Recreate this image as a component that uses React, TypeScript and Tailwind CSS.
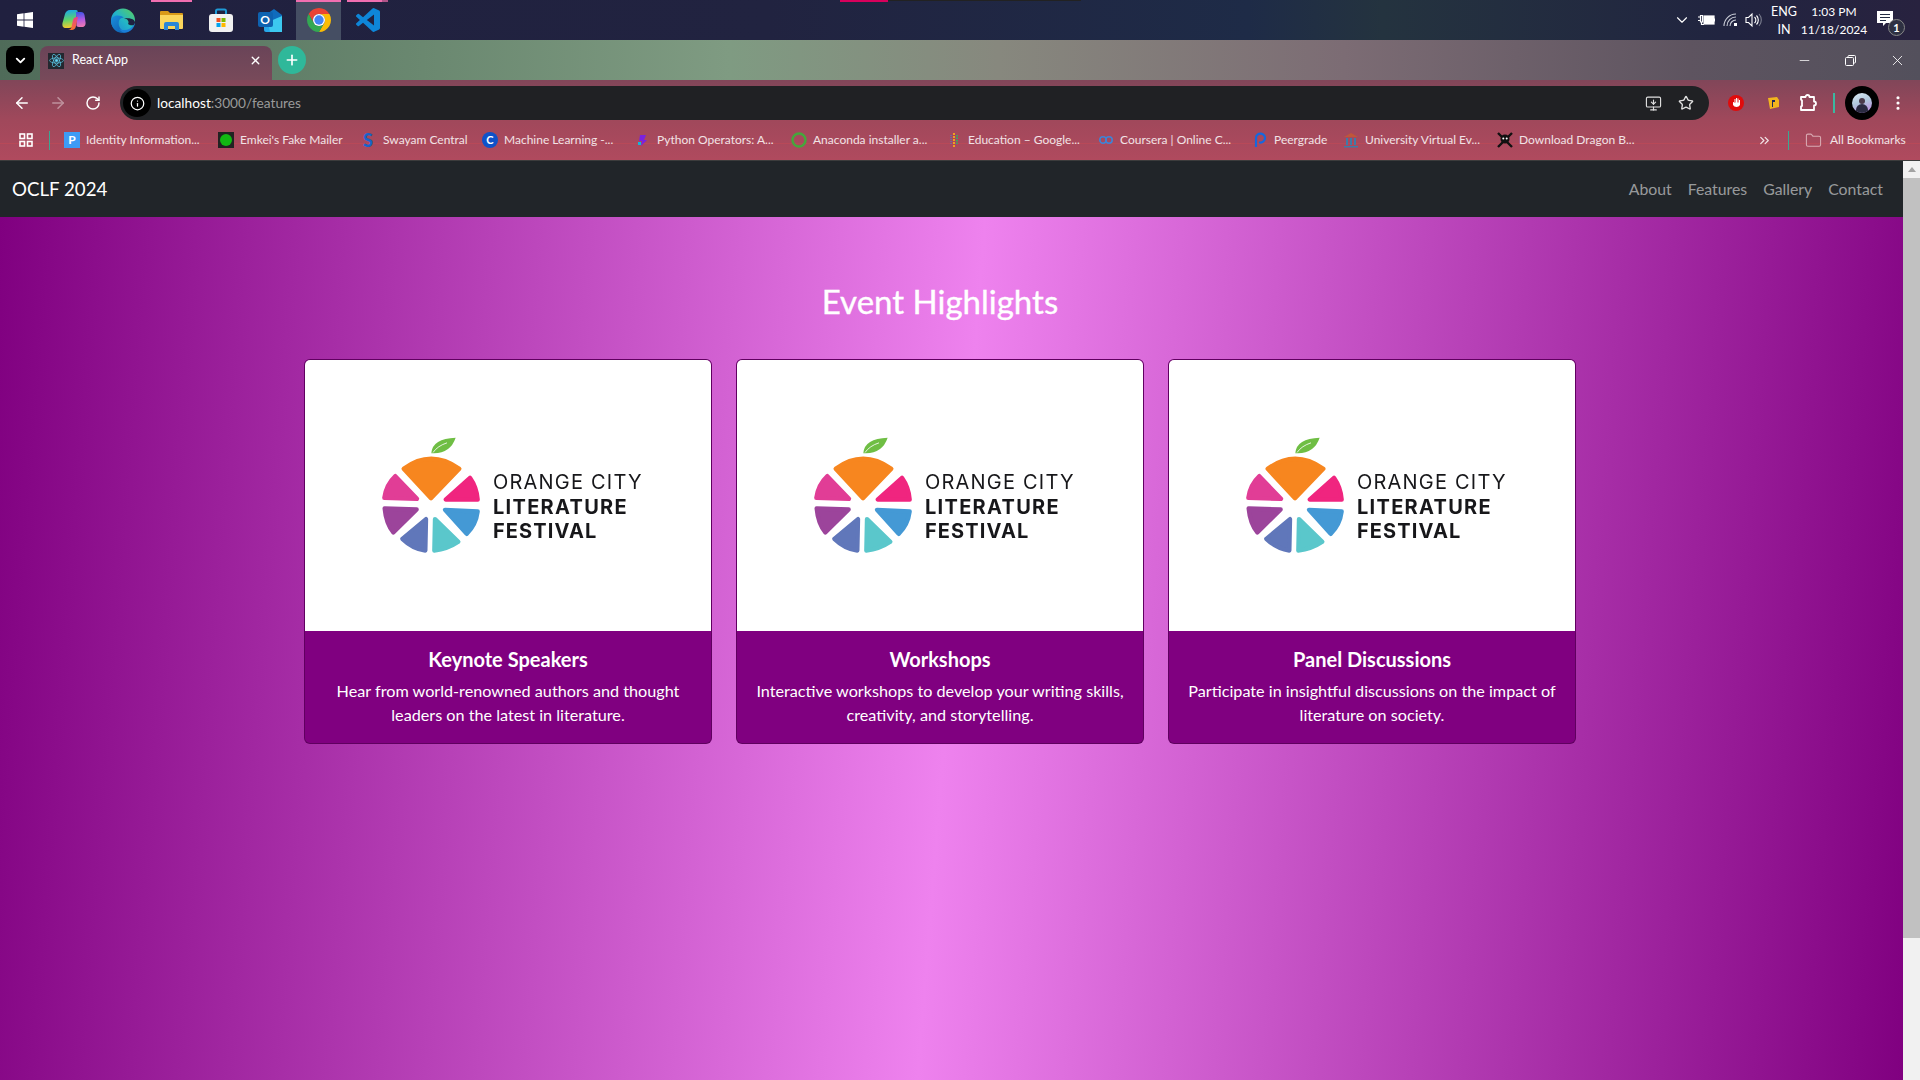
import { ArrowLeft, ArrowRight, RotateCw, Info, Star, EllipsisVertical, Minus, X, Plus, ChevronDown, Folder, ChevronsRight, MonitorDown } from "lucide-react";

const ui = { fontFamily: 'Lato, "Noto Sans", sans-serif' };

function Logo() {
  return (
    <div className="h-[271px] bg-white flex items-center pl-[76px] text-left">
      <svg width="100" height="117" viewBox="30 20 300 350" className="shrink-0 blur-[0.3px]">
        <g strokeWidth="13" strokeLinejoin="round">
          <path d="M98 115 Q180 55 265 115 L180 203 Z" fill="#f7861f" stroke="#f7861f" />
          <path d="M297 142 Q317 170 320 207 L224 207 Z" fill="#f0257f" stroke="#f0257f" />
          <path d="M222 238 L320 243 Q315 283 287 310 Z" fill="#4499d5" stroke="#4499d5" />
          <path d="M192 266 L262 334 Q230 356 190 360 Z" fill="#5ac7cb" stroke="#5ac7cb" />
          <path d="M165 266 L163 360 Q125 355 94 325 Z" fill="#6077ba" stroke="#6077ba" />
          <path d="M41 234 L137 237 L67 306 Q45 278 41 234 Z" fill="#9c449b" stroke="#9c449b" />
          <path d="M73 137 L138 205 L40 202 Q46 162 73 137 Z" fill="#e13d96" stroke="#e13d96" />
        </g>
        <path d="M181 68 Q185 24 254 22 Q237 72 181 68 Z" fill="#6fbe44" />
        <path d="M186 66 Q200 46 228 37" fill="none" stroke="#fff" strokeWidth="2.5" />
      </svg>
      <div className="ml-[12px] mt-[23px] text-[#17171a] whitespace-nowrap blur-[0.3px]" style={{ fontFamily: "Inter, sans-serif" }}>
        <div className="text-[20px] leading-[24.5px] font-normal tracking-[1.2px]">ORANGE CITY</div>
        <div className="text-[20px] leading-[24.5px] font-bold tracking-[1.3px]">LITERATURE</div>
        <div className="text-[20px] leading-[24.5px] font-bold tracking-[1.1px]">FESTIVAL</div>
      </div>
    </div>
  );
}

function Card({ title, children }: { title: string; children: React.ReactNode }) {
  return (
    <div className="w-[408px] border border-[rgba(0,0,0,0.25)] rounded-md overflow-hidden bg-[#800080] text-white text-center">
      <Logo />
      <div className="p-4">
        <h5 className="text-[20px] leading-6 font-bold mb-2">{title}</h5>
        <p className="text-[16.2px] leading-6">{children}</p>
      </div>
    </div>
  );
}

function TaskBtn({ children, active, line }: { children: React.ReactNode; active?: boolean; line?: boolean }) {
  return (
    <div className={active ? "relative w-[45px] mx-[2px] h-10 bg-[#454e63] flex items-center justify-center" : "relative w-[49px] h-10 flex items-center justify-center"}>
      {line ? <div className={active ? "absolute top-0 left-0 right-0 h-[2px] bg-[#f06eb0]" : "absolute top-0 left-[4px] right-[4px] h-[2px] bg-[#f06eb0]"} /> : null}
      {children}
    </div>
  );
}

const bookmarks: { icon: React.ReactNode; text: string; w: string }[] = [
  { w: "w-[114px]", text: "Identity Information...", icon: <div className="w-4 h-4 bg-[#3d9bf5] text-white text-[12px] font-bold leading-4 text-center">P</div> },
  { w: "w-[103px]", text: "Emkei's Fake Mailer", icon: <div className="w-4 h-4 bg-[#222] flex items-center justify-center"><div className="w-3 h-3 rounded-full bg-[#12b812]" /></div> },
  { w: "w-[81px]", text: "Swayam Central", icon: <div className="w-4 h-4 -ml-[1px] text-[#1763c9] text-[18px] font-black leading-4 text-center">S</div> },
  { w: "w-[113px]", text: "Machine Learning -...", icon: <div className="w-4 h-4 rounded-full bg-[#0f52c9] text-white text-[11px] font-bold leading-4 text-center">C</div> },
  { w: "w-[116px]", text: "Python Operators: A...", icon: <svg width="16" height="16" viewBox="0 0 16 16"><path d="M5 3h6l-2 5h3l-6 6 1-5H4z" fill="#7a22e0" /><path d="M3 10h3v3H3z" fill="#14b6d6" /></svg> },
  { w: "w-[115px]", text: "Anaconda installer a...", icon: <svg width="16" height="16" viewBox="0 0 16 16"><circle cx="8" cy="8" r="6.5" fill="none" stroke="#46a63c" strokeWidth="2.5" /></svg> },
  { w: "w-[112px]", text: "Education – Google...", icon: <svg width="16" height="16" viewBox="0 0 16 16"><path d="M8 1v14" stroke="#f0a020" strokeWidth="2" strokeDasharray="2 1" /><path d="M5 3v10" stroke="#3c8ad8" strokeWidth="1" strokeDasharray="1 1" /><path d="M11 3v10" stroke="#3ca860" strokeWidth="2" strokeDasharray="1.5 1" /></svg> },
  { w: "w-[114px]", text: "Coursera | Online C...", icon: <svg width="16" height="16" viewBox="0 0 16 16"><circle cx="5" cy="8" r="3.2" fill="none" stroke="#3f83d6" strokeWidth="1.6" /><circle cx="11" cy="8" r="3.2" fill="none" stroke="#3f83d6" strokeWidth="1.6" /></svg> },
  { w: "w-[51px]", text: "Peergrade", icon: <svg width="16" height="16" viewBox="0 0 16 16"><path d="M4 15V6a4.5 4.5 0 1 1 3 4.3" fill="none" stroke="#1468e0" strokeWidth="2.2" /></svg> },
  { w: "w-[114px]", text: "University Virtual Ev...", icon: <svg width="16" height="16" viewBox="0 0 16 16"><path d="M8 1l7 4H1z" fill="#c0563a" /><path d="M3 6h2v7H3zM7 6h2v7H7zM11 6h2v7h-2z" fill="#3e7ba8" /><path d="M1 14h14v1.5H1z" fill="#3e7ba8" /></svg> },
  { w: "w-[116px]", text: "Download Dragon B...", icon: <svg width="16" height="16" viewBox="0 0 16 16"><path d="M1 1l14 14M15 1L1 15" stroke="#111" strokeWidth="2.4" /><circle cx="8" cy="7" r="4.5" fill="#111" /><circle cx="6.3" cy="6.5" r="1" fill="#fff" /><circle cx="9.7" cy="6.5" r="1" fill="#fff" /></svg> },
];

export default function App() {
  return (
    <div className="h-screen w-[1920px] overflow-hidden flex flex-col bg-[#212529]" style={ui}>
      {/* Windows taskbar */}
      <div className="relative h-10 shrink-0 flex items-center bg-[linear-gradient(90deg,#20203f_0%,#212340_40%,#1e2b47_65%,#24333f_72%,#212440_90%,#28223f_100%)] text-white">
        <div className="absolute top-0 left-[840px] w-[48px] h-[2px] bg-[#d8005c]" />
        <div className="absolute top-0 left-[888px] w-[193px] h-[1px] bg-[#222]" />
        <TaskBtn>
          <svg width="16" height="16" viewBox="0 0 16 16" fill="#fff"><path d="M0 2.2l6.6-.9v6.3H0zM7.4 1.2L16 0v7.6H7.4zM0 8.4h6.6v6.3L0 13.8zM7.4 8.4H16V16l-8.6-1.2z" /></svg>
        </TaskBtn>
        <TaskBtn>
          <svg width="24" height="22" viewBox="0 0 24 22">
            <defs>
              <linearGradient id="cp1" x1="0.3" y1="0" x2="0.4" y2="1"><stop offset="0" stopColor="#1aa7e8" /><stop offset="0.55" stopColor="#5fd36a" /><stop offset="1" stopColor="#f7c92e" /></linearGradient>
              <linearGradient id="cp2" x1="0.5" y1="0" x2="0.6" y2="1"><stop offset="0" stopColor="#3f55e8" /><stop offset="0.5" stopColor="#b05ae0" /><stop offset="1" stopColor="#f07ab0" /></linearGradient>
              <linearGradient id="cp3" x1="0" y1="0" x2="0" y2="1"><stop offset="0" stopColor="#e83f8c" /><stop offset="1" stopColor="#f7742e" /></linearGradient>
            </defs>
            <path d="M8 1h6c1.500 0 2 1 1.500 2L12 15c-1 3-3 4-5 4H4c-3 0-4-2-3.500-5L3 5c.5-2 2.500-4 5-4z" fill="url(#cp1)" />
            <path d="M14 3h5c2 0 3 1 3.500 3l1 7c.5 3-1 5-3.500 5h-3c-2 0-3-1-2.500-3z" fill="url(#cp2)" />
            <path d="M11 11c.5-2 2-3 4-3h1l-2 9c-.5 2.500-2 4-4.500 4H6c2 0 3-1 3.500-3z" fill="url(#cp3)" />
          </svg>
        </TaskBtn>
        <TaskBtn>
          <svg width="24" height="25" viewBox="0 0 24 25">
            <defs>
              <linearGradient id="ed1" x1="1" y1="0" x2="0" y2="1"><stop offset="0" stopColor="#5cd05a" /><stop offset="0.5" stopColor="#22b4c8" /><stop offset="1" stopColor="#1e7fd8" /></linearGradient>
              <linearGradient id="ed2" x1="0" y1="0" x2="1" y2="1"><stop offset="0" stopColor="#1a8fdc" /><stop offset="1" stopColor="#0c58ac" /></linearGradient>
            </defs>
            <circle cx="12" cy="12.500" r="12" fill="url(#ed1)" />
            <path d="M0 12.500C1 7 9 6 13 10c-4-1-6 3-5 7.500 1 4 5 7 10 6-3 1.500-6 1.500-8 1.200C4 24 0 19 0 12.500z" fill="url(#ed2)" />
            <path d="M13 10c4 0 11 .5 11 4.500 0 3.500-4.500 3.500-7 1.500 1.500-2 0-5-4-6z" fill="#1f2140" />
            <path d="M24 15c-.5 5-5 10-11 9.500-2.500-.5-4-2-5-4 4 3 12 2 16-5.500z" fill="#1a7ed8" />
          </svg>
        </TaskBtn>
        <TaskBtn line>
          <svg width="23" height="20" viewBox="0 0 23 20">
            <path d="M0 2a1 1 0 0 1 1-1h7l2 2h12a1 1 0 0 1 1 1v3H0z" fill="#d99a18" />
            <path d="M0 5h23v13a1 1 0 0 1-1 1H1a1 1 0 0 1-1-1z" fill="#fbd65c" />
            <path d="M4 20v-6a2 2 0 0 1 2-2h11a2 2 0 0 1 2 2v6h-4v-4H8v4z" fill="#2a86d8" />
          </svg>
        </TaskBtn>
        <TaskBtn>
          <svg width="24" height="24" viewBox="0 0 24 24">
            <path d="M7 7V3a1.500 1.500 0 0 1 1.500-1.500h7A1.500 1.500 0 0 1 17 3v4" fill="none" stroke="#1f9ad6" strokeWidth="2" />
            <rect x="0" y="6" width="24" height="18" rx="3" fill="#f1f1f1" />
            <rect x="7.500" y="10" width="4" height="4" fill="#f25022" />
            <rect x="12.500" y="10" width="4" height="4" fill="#7fba00" />
            <rect x="7.500" y="15" width="4" height="4" fill="#00a4ef" />
            <rect x="12.500" y="15" width="4" height="4" fill="#ffb900" />
          </svg>
        </TaskBtn>
        <TaskBtn>
          <div className="relative w-6 h-[23px]">
            <svg width="24" height="23" viewBox="0 0 24 23" className="absolute inset-0">
              <path d="M6 7l10-7 8 6v8H6z" fill="#0f6cbd" />
              <path d="M6 12h18v9a2 2 0 0 1-2 2H8a2 2 0 0 1-2-2z" fill="#28a8ea" />
              <path d="M24 7v16H12l-2-10z" fill="#3cc8f0" />
            </svg>
            <div className="absolute left-0 top-[3px] w-[15px] h-[15px] rounded-[2px] bg-[#0e62b0] text-white text-[12px] font-bold leading-[15px] text-center">O</div>
          </div>
        </TaskBtn>
        <TaskBtn active line>
          <svg width="24" height="24" viewBox="2 2 44 44">
            <path d="M43.050 13A22 22 0 0 0 4.950 13L14.470 29.500A11 11 0 0 1 24 13Z" fill="#ea4335" />
            <path d="M43.050 13A22 22 0 0 1 24 46L33.530 29.500A11 11 0 0 0 24 13Z" fill="#fbbc05" />
            <path d="M4.950 13A22 22 0 0 0 24 46L33.530 29.500A11 11 0 0 1 14.470 29.500Z" fill="#34a853" />
            <circle cx="24" cy="24" r="11" fill="#fff" />
            <circle cx="24" cy="24" r="8.600" fill="#4285f4" />
          </svg>
        </TaskBtn>
        <div className="relative w-[49px] h-10 flex items-center justify-center">
          <div className="absolute top-0 left-[4px] right-[10px] h-[2px] bg-[#f06eb0]" />
          <div className="absolute top-0 right-[4px] w-[6px] h-[2px] bg-[#b05488]" />
          <svg width="24" height="24" viewBox="0 0 24 24">
            <path d="M23.150 2.587L18.210.21a1.494 1.494 0 0 0-1.705.29l-9.460 8.630-4.120-3.128a.999.999 0 0 0-1.276.057L.327 7.261A1 1 0 0 0 .326 8.740L3.899 12 .326 15.260a1 1 0 0 0 .001 1.479L1.650 17.940a.999.999 0 0 0 1.276.057l4.120-3.128 9.460 8.630a1.492 1.492 0 0 0 1.704.29l4.942-2.377A1.500 1.500 0 0 0 24 20.060V3.939a1.500 1.500 0 0 0-.850-1.352zm-5.146 14.861L10.826 12l7.178-5.448v10.896z" fill="#0e86d8" />
          </svg>
        </div>
        <div className="flex-1" />
        <ChevronDown size={18} strokeWidth={1.5} className="mr-[7px]" />
        <svg width="17" height="12" viewBox="0 0 17 12" className="mr-[8px]" fill="none" stroke="#fff" strokeWidth="1.200"><path d="M0 3h2.500M0 6.500h2.500M2.500 1.500h2v6.500h-2zM3.500 8v2.500h2.500" /><rect x="6" y="2" width="10" height="8" fill="#fff" /><path d="M16.500 4.500v3" /></svg>
        <svg width="17" height="14" viewBox="0 0 17 14" className="mr-[5px]" fill="none" stroke="#c9ccd6" strokeWidth="1.100"><path d="M1 13A12 12 0 0 1 13 1M4 13A9 9 0 0 1 13 4M7 13A6 6 0 0 1 13 7" /><rect x="11" y="10" width="3" height="3" fill="#fff" stroke="none" /></svg>
        <svg width="18" height="16" viewBox="0 0 18 16" className="mr-[7px]" fill="none" stroke="#fff" strokeWidth="1.100"><path d="M1 5.500h2.500L7 2v12L3.500 10.500H1z" /><path d="M9.500 5a4 4 0 0 1 0 6M11.500 3.500a6.500 6.500 0 0 1 0 9" /><path d="M14 2a9 9 0 0 1 0 12" stroke="#7d8090" /></svg>
        <div className="w-[28px] text-[12.5px] leading-[18px] pt-px text-center">
          <div>ENG</div>
          <div>IN</div>
        </div>
        <div className="w-[72px] text-[12px] leading-[18px] pt-px text-center">
          <div>1:03 PM</div>
          <div>11/18/2024</div>
        </div>
        <div className="relative w-[36px] mr-[14px] h-10 flex items-center justify-center">
          <svg width="16" height="15" viewBox="0 0 16 15" className="-mt-[3px] -ml-[6px]"><path d="M0 0h16v12H9l-3 3v-3H0z" fill="#fff" /><path d="M3 3.500h10M3 6.500h10M3 9.500h6" stroke="#222a42" strokeWidth="1" /></svg>
          <div className="absolute left-[18px] top-[19px] w-[17px] h-[17px] rounded-full border border-[#888] bg-[#2e3142] text-[11px] font-bold leading-[15px] text-center">1</div>
        </div>
      </div>

      {/* Tab strip */}
      <div className="relative h-10 shrink-0 flex items-end bg-[linear-gradient(90deg,#4f6b59_0%,#6a8870_22%,#7f9b82_38%,#87887e_52%,#7c6c74_70%,#5e5460_88%,#53505c_100%)] text-white">
        <div className="w-7 h-7 ml-[6px] mb-[6px] rounded-lg bg-black flex items-center justify-center"><ChevronDown size={15} strokeWidth={3} /></div>
        <div className="w-[232px] h-[34px] ml-[6px] rounded-t-lg bg-[linear-gradient(180deg,#6a4458,#784a5a)] flex items-center pl-2 pr-2 pb-[5px]">
          <div className="w-4 h-4 bg-[#23272f] flex items-center justify-center">
            <svg width="15" height="15" viewBox="-12 -12 24 24" fill="none" stroke="#61dafb" strokeWidth="1">
              <ellipse rx="11" ry="4.200" /><ellipse rx="11" ry="4.200" transform="rotate(60)" /><ellipse rx="11" ry="4.200" transform="rotate(120)" /><circle r="2" fill="#61dafb" />
            </svg>
          </div>
          <span className="ml-2 text-[12.5px]">React App</span>
          <div className="flex-1" />
          <X size={13} strokeWidth={2.5} className="mr-[2px]" />
        </div>
        <div className="w-7 h-7 ml-[6px] mb-[6px] rounded-full bg-[#2fb89a] flex items-center justify-center"><Plus size={16} strokeWidth={2.5} /></div>
        <div className="flex-1" />
        <div className="flex items-center h-10 pr-[14px] gap-[32px]">
          <Minus size={15} strokeWidth={1.2} />
          <svg width="13" height="13" viewBox="0 0 13 13" fill="none" stroke="#fff" strokeWidth="1"><rect x="1.500" y="3.500" width="8" height="8" rx="1" /><path d="M4 3.500V2.500a1 1 0 0 1 1-1h5.500a1 1 0 0 1 1 1V8a1 1 0 0 1-1 1h-1" /></svg>
          <X size={17} strokeWidth={1.2} />
        </div>
      </div>

      {/* Toolbar and bookmarks */}
      <div className="relative shrink-0 h-[81px] bg-[linear-gradient(180deg,#814659_0%,#a0485b_50%,#b04a5e_100%)] border-b border-[#3c3c3c] text-white">
        <div className="h-10 flex items-end">
          <div className="w-[120px] h-[34px] flex items-center pl-[13px] gap-[18px]">
            <ArrowLeft size={18} strokeWidth={2} />
            <ArrowRight size={18} strokeWidth={2} className="opacity-40" />
            <RotateCw size={16} strokeWidth={2.2} />
          </div>
          <div className="w-[1589px] h-[34px] rounded-full bg-[#202124] flex items-center pl-[3px] pr-[14px]">
            <div className="w-7 h-7 rounded-full bg-black flex items-center justify-center"><Info size={15} /></div>
            <span className="ml-[6px] text-[13.7px] leading-[18px] -mt-[1px]">localhost<span className="text-[#9a9a9a]">:3000/features</span></span>
            <div className="flex-1" />
            <MonitorDown size={17} strokeWidth={1.6} className="mr-[16px] text-[#e0e0e0]" />
            <Star size={16} strokeWidth={2} className="mr-[1px] text-[#e0e0e0]" />
          </div>
          <div className="flex-1 h-[34px] flex items-center relative pl-[19px]">
            <div className="w-4 h-4 rounded-full bg-[#e00b0b] flex items-center justify-center"><svg width="9" height="12" viewBox="0 0 9 12"><path d="M1 5v3a4 4 0 0 0 7 0V3H7v2.500H6.500V1.500h-1v4H5V1h-1v4.500H3.500V2h-1v4L1.500 5z" fill="#fff" /></svg></div>
            <svg width="14" height="16" viewBox="0 0 14 16" className="ml-[22px]"><path d="M2 3l9-1 2 3v7l-9 2z" fill="#f2b51d" /><path d="M6 5h3v2H7v5H6z" fill="#1e2a5a" /></svg>
            <svg width="18" height="18" viewBox="0 0 18 18" className="ml-[19px]" fill="none" stroke="#fff" strokeWidth="1.800" strokeLinejoin="round"><path d="M2 3h4.500a2 2 0 0 1 4 0H15v4.500a2 2 0 0 1 0 4V16H2v-3.500a1 1 0 0 0 1-1.500V6.500L2 5.500z" /></svg>
            <div className="w-[2px] h-5 bg-[#3ab8a0] ml-[16px]" />
            <div className="w-[34px] h-[34px] rounded-full bg-black flex items-center justify-center ml-[10px]">
              <div className="relative w-5 h-5 rounded-full overflow-hidden bg-[linear-gradient(160deg,#dcecf4_0%,#b0c8dc_45%,#c080e0_100%)]">
                <div className="absolute left-[7px] top-[5px] w-[6px] h-[6px] rounded-full bg-[#4a3a4a]" />
                <div className="absolute left-[4px] top-[11px] w-3 h-3 rounded-t-md bg-[#2a2a40]" />
              </div>
            </div>
            <EllipsisVertical size={18} strokeWidth={2.2} className="ml-[10px]" />
          </div>
        </div>
        <div className="relative h-10 flex items-center text-[12px] text-[#f2e3e6]">
          <div className="absolute left-0 right-0 top-[23px] h-px bg-[#c34a55] opacity-60" />
          <div className="relative w-[49px] flex justify-center pl-[3px]">
            <svg width="14" height="14" viewBox="0 0 14 14" fill="none" stroke="#fff" strokeWidth="1.600"><rect x="1" y="1" width="4.500" height="4.500" /><rect x="8.500" y="1" width="4.500" height="4.500" /><rect x="1" y="8.500" width="4.500" height="4.500" /><rect x="8.500" y="8.500" width="4.500" height="4.500" /></svg>
          </div>
          <div className="relative w-px h-[19px] bg-[#3aa893]" />
          <div className="relative flex items-center gap-[18px] ml-[14px]">
            {bookmarks.map((b) => (
              <div key={b.text} className="flex items-center gap-[6px]">
                <div className="w-4 h-4 shrink-0">{b.icon}</div>
                <span className={b.w + " whitespace-nowrap"}>{b.text}</span>
              </div>
            ))}
          </div>
          <div className="flex-1" />
          <ChevronsRight size={15} strokeWidth={2} className="relative mr-[16px]" />
          <div className="relative w-px h-[19px] bg-[#3aa893] mr-[16px]" />
          <Folder size={17} strokeWidth={1.5} className="relative text-[#d9aab2] mr-[8px]" />
          <span className="relative w-[75px] mr-[15px] whitespace-nowrap">All Bookmarks</span>
        </div>
      </div>

      {/* Page and its scrollbar */}
      <div className="flex-1 min-h-0 flex">
        <div className="flex-1 min-w-0 flex flex-col">
          <nav className="h-14 shrink-0 bg-[#212529] flex items-center pl-3 pr-[20px]">
            <span className="text-[18.7px] text-white">OCLF 2024</span>
            <div className="flex-1" />
            <div className="flex items-center gap-4 text-[15.8px] text-[rgba(255,255,255,0.55)]">
              <span>About</span>
              <span>Features</span>
              <span>Gallery</span>
              <span>Contact</span>
            </div>
          </nav>
          <main className="flex-1 bg-[linear-gradient(94.5deg,#800080,#ee82ee,#800080)] pt-[65px] pr-[23px]">
            <h2 className="text-[33px] leading-[38px] text-white text-center mb-[39px] [-webkit-text-stroke:0.35px_white]">Event Highlights</h2>
            <div className="flex justify-center gap-6">
              <Card title="Keynote Speakers">Hear from world-renowned authors and thought leaders on the latest in literature.</Card>
              <Card title="Workshops">Interactive workshops to develop your writing skills, creativity, and storytelling.</Card>
              <Card title="Panel Discussions">Participate in insightful discussions on the impact of literature on society.</Card>
            </div>
          </main>
        </div>
        <div className="w-[17px] shrink-0 bg-[#f1f1f1] flex flex-col items-center">
          <div className="h-[17px] flex items-center justify-center"><div className="w-0 h-0 border-x-[4px] border-x-transparent border-b-[5px] border-b-[#a3a3a3]" /></div>
          <div className="w-full h-[760px] bg-[#c1c1c1]" />
        </div>
      </div>
    </div>
  );
}
